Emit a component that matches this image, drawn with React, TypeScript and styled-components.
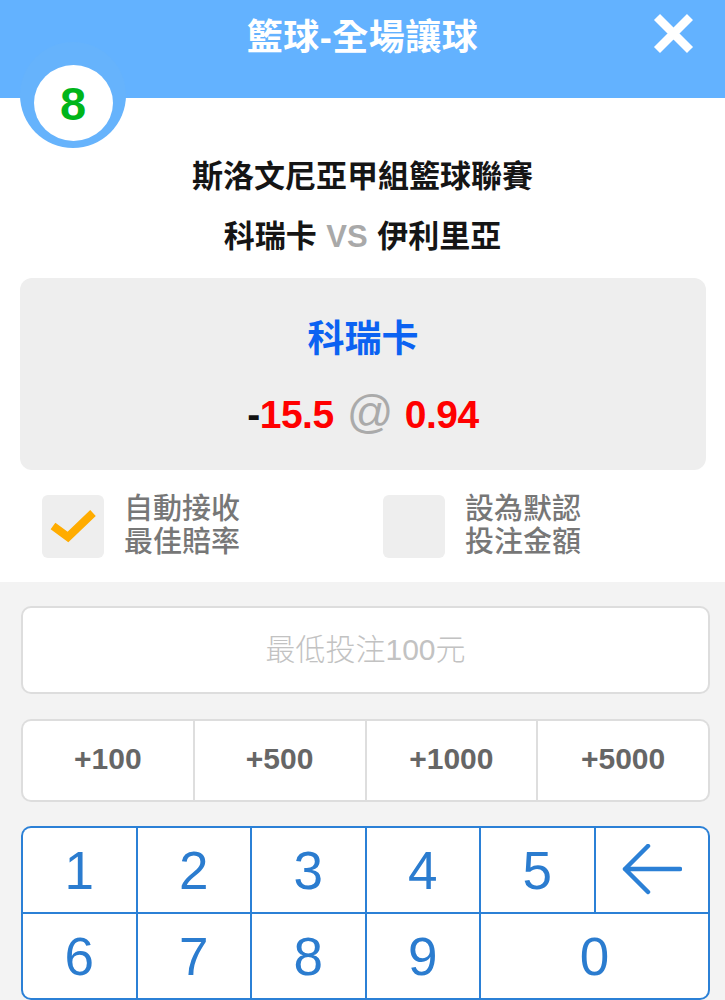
import React from "react";
import styled, { createGlobalStyle } from "styled-components";

const GlobalStyle = createGlobalStyle`
  html, body {
    margin: 0;
    padding: 0;
    background: #f3f3f3;
  }
  body {
    font-family: "Liberation Sans", "Noto Sans CJK TC", sans-serif;
  }
  * {
    box-sizing: border-box;
  }
`;

const Page = styled.div`
  width: 725px;
  height: 1000px;
  overflow: hidden;
  background: #f3f3f3;
  position: relative;
`;

const Header = styled.header`
  height: 98px;
  background: #63b2ff;
  display: grid;
  grid-template-columns: 1fr auto 1fr;
  align-items: start;
  position: relative;
`;

const Title = styled.h1`
  grid-column: 2;
  margin: 16px 0 0;
  font-size: 36px;
  line-height: 44px;
  font-weight: 700;
  color: #ffffff;
  letter-spacing: 0.5px;
`;

const CloseButton = styled.button`
  grid-column: 3;
  justify-self: end;
  margin: 13px 31px 0 0;
  padding: 0;
  width: 41px;
  height: 41px;
  border: none;
  background: transparent;
  display: flex;
  align-items: center;
  justify-content: center;
`;

const Badge = styled.div`
  position: absolute;
  left: 20px;
  top: 42px;
  width: 106px;
  height: 106px;
  border-radius: 50%;
  background: #66b3fc;
  display: flex;
  justify-content: center;
  padding-top: 23px;
`;

const BadgeInner = styled.div`
  width: 79px;
  height: 76px;
  border-radius: 50%;
  background: #ffffff;
  display: flex;
  align-items: center;
  justify-content: center;
  font-size: 47px;
  font-weight: 700;
  color: #00b51a;
`;

const Body = styled.section`
  background: #ffffff;
  padding: 59px 0 23px;
`;

const League = styled.div`
  text-align: center;
  font-size: 31px;
  line-height: 40px;
  font-weight: 700;
  color: #151515;
`;

const Teams = styled.div`
  margin-top: 20px;
  text-align: center;
  font-size: 31px;
  line-height: 40px;
  font-weight: 700;
  color: #151515;
`;

const Vs = styled.span`
  color: #a9a9a9;
  margin: 0 1px;
`;

const OddsCard = styled.div`
  margin: 21px 19px 0 20px;
  height: 192px;
  border-radius: 12px;
  background: #eeeeee;
  display: flex;
  flex-direction: column;
  align-items: center;
  padding-top: 40px;
`;

const Pick = styled.div`
  font-size: 37px;
  line-height: 44px;
  font-weight: 700;
  color: #0b62f2;
`;

const Odds = styled.div`
  margin-top: 26px;
  font-size: 39px;
  line-height: 48px;
  font-weight: 700;
  color: #ff0000;
  display: flex;
  align-items: baseline;
  letter-spacing: -0.5px;
`;

const Minus = styled.span`
  color: #111111;
`;

const At = styled.span`
  color: #aaaaaa;
  font-size: 46px;
  font-weight: 400;
  margin: 0 12px 0 13px;
`;

const Options = styled.div`
  margin-top: 23px;
  display: grid;
  grid-template-columns: 341px 1fr;
  padding-left: 42px;
`;

const Option = styled.label`
  display: flex;
  align-items: center;
  gap: 20px;
`;

const CheckBox = styled.span`
  width: 62px;
  height: 63px;
  border-radius: 6px;
  background: #eeeeee;
  display: flex;
  align-items: center;
  justify-content: center;
  flex-shrink: 0;
`;

const OptionText = styled.span`
  font-size: 29px;
  line-height: 33px;
  font-weight: 500;
  color: #777777;
`;

const BetArea = styled.section`
  padding: 24px 15px 0 21px;
  display: flex;
  flex-direction: column;
`;

const AmountInput = styled.input`
  height: 88px;
  width: 100%;
  border: 2px solid #dddddd;
  border-radius: 10px;
  background: #ffffff;
  text-align: center;
  font-family: "Liberation Sans", "Noto Sans CJK TC", sans-serif;
  font-size: 30px;
  font-weight: 300;
  outline: none;
  &::placeholder {
    color: #c2c2c2;
  }
`;

const QuickRow = styled.div`
  margin-top: 25px;
  height: 83px;
  display: grid;
  grid-template-columns: repeat(4, 1fr);
  gap: 2px;
  background: #dedede;
  border: 2px solid #dddddd;
  border-radius: 10px;
  overflow: hidden;
`;

const QuickButton = styled.button`
  border: none;
  background: #ffffff;
  font-family: "Liberation Sans", sans-serif;
  font-size: 30px;
  font-weight: 700;
  color: #666666;
  padding: 0 0 4px;
`;

const Keypad = styled.div`
  margin-top: 24px;
  display: grid;
  grid-template-columns: repeat(6, 1fr);
  grid-template-rows: 84px 84px;
  gap: 2px;
  background: #2b80d6;
  border: 2px solid #2b80d6;
  border-radius: 10px;
  overflow: hidden;
`;

const Key = styled.button<{ $span?: number }>`
  grid-column: span ${(p) => p.$span ?? 1};
  border: none;
  background: #ffffff;
  font-family: "Liberation Sans", sans-serif;
  font-size: 53px;
  font-weight: 400;
  color: #2b7ccf;
  padding: 0;
  display: flex;
  align-items: center;
  justify-content: center;
`;

const CloseIcon = () => (
  <svg width="41" height="41" viewBox="0 0 41 41">
    <path d="M4 4 L37 37 M37 4 L4 37" stroke="#ffffff" strokeWidth="8.5" />
  </svg>
);

const CheckIcon = () => (
  <svg width="48" height="34" viewBox="0 0 48 34">
    <path
      d="M4 17 L19 28 L44 4"
      fill="none"
      stroke="#ffac00"
      strokeWidth="8"
      strokeLinejoin="miter"
    />
  </svg>
);

const BackIcon = () => (
  <svg width="60" height="52" viewBox="0 0 60 52">
    <path
      d="M26 2 L3 25 L26 48 M3 25 H58"
      fill="none"
      stroke="#2b80d6"
      strokeWidth="4.5"
      strokeLinecap="round"
      strokeLinejoin="round"
    />
  </svg>
);

const quickAmounts = ["+100", "+500", "+1000", "+5000"];

export default function App() {
  return (
    <Page>
      <GlobalStyle />
      <Header>
        <Title>籃球-全場讓球</Title>
        <CloseButton aria-label="close">
          <CloseIcon />
        </CloseButton>
        <Badge>
          <BadgeInner>8</BadgeInner>
        </Badge>
      </Header>

      <Body>
        <League>斯洛文尼亞甲組籃球聯賽</League>
        <Teams>
          科瑞卡 <Vs>VS</Vs> 伊利里亞
        </Teams>
        <OddsCard>
          <Pick>科瑞卡</Pick>
          <Odds>
            <Minus>-</Minus>15.5<At>@</At>0.94
          </Odds>
        </OddsCard>
        <Options>
          <Option>
            <CheckBox>
              <CheckIcon />
            </CheckBox>
            <OptionText>
              自動接收
              <br />
              最佳賠率
            </OptionText>
          </Option>
          <Option>
            <CheckBox />
            <OptionText>
              設為默認
              <br />
              投注金額
            </OptionText>
          </Option>
        </Options>
      </Body>

      <BetArea>
        <AmountInput placeholder="最低投注100元" />
        <QuickRow>
          {quickAmounts.map((a) => (
            <QuickButton key={a}>{a}</QuickButton>
          ))}
        </QuickRow>
        <Keypad>
          {["1", "2", "3", "4", "5"].map((n) => (
            <Key key={n}>{n}</Key>
          ))}
          <Key aria-label="backspace">
            <BackIcon />
          </Key>
          {["6", "7", "8", "9"].map((n) => (
            <Key key={n}>{n}</Key>
          ))}
          <Key $span={2}>0</Key>
        </Keypad>
      </BetArea>
    </Page>
  );
}
